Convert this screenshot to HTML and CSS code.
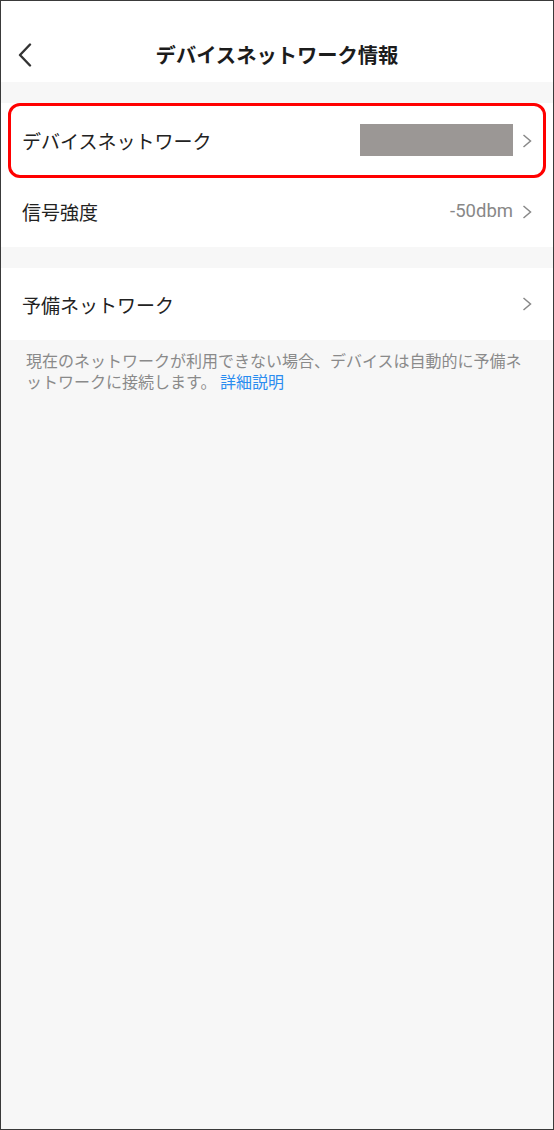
FILE: index.html
```html
<!DOCTYPE html>
<html lang="ja">
<head>
<meta charset="utf-8">
<link rel="stylesheet" href="styles.css">
</head>
<body>
<div class="frame">
  <header class="topbar">
    <svg class="back" width="14" height="24" viewBox="0 0 14 24"><path d="M12 1.5 L2 12 L12 22.5" fill="none" stroke="#333" stroke-width="2.4" stroke-linecap="round" stroke-linejoin="round"/></svg>
    <h1 class="title">デバイスネットワーク情報</h1>
  </header>
  <div class="gap"></div>
  <section class="group">
    <div class="row row-first">
      <span class="label">デバイスネットワーク</span>
      <span class="right"><span class="masked"></span><svg class="chev" width="10" height="14" viewBox="0 0 10 14"><path d="M1.5 1 L8.5 7 L1.5 13" fill="none" stroke="#888" stroke-width="1.5"/></svg></span>
      <div class="highlight"></div>
    </div>
    <div class="row row-second">
      <span class="label">信号強度</span>
      <span class="right"><span class="value">-50dbm</span><svg class="chev" width="10" height="14" viewBox="0 0 10 14"><path d="M1.5 1 L8.5 7 L1.5 13" fill="none" stroke="#888" stroke-width="1.5"/></svg></span>
    </div>
  </section>
  <div class="gap"></div>
  <section class="group">
    <div class="row row-third">
      <span class="label">予備ネットワーク</span>
      <span class="right"><svg class="chev" width="10" height="14" viewBox="0 0 10 14"><path d="M1.5 1 L8.5 7 L1.5 13" fill="none" stroke="#888" stroke-width="1.5"/></svg></span>
    </div>
  </section>
  <p class="note">現在のネットワークが利用できない場合、デバイスは自動的に予備ネットワークに接続します。 <a class="link">詳細説明</a></p>
</div>
</body>
</html>
```
FILE: styles.css
```css
* { box-sizing: border-box; }
html, body { margin: 0; padding: 0; }
body {
  width: 554px;
  height: 1130px;
  font-family: "Noto Sans CJK JP", "Noto Sans", sans-serif;
  background: #f7f7f7;
}
.frame {
  width: 554px;
  height: 1130px;
  border: 1px solid #3a3a3a;
  background: #f7f7f7;
  overflow: hidden;
}
.topbar {
  height: 81px;
  background: #fff;
  display: flex;
  align-items: center;
  justify-content: center;
  position: relative;
  padding-top: 26px;
}
.back {
  position: absolute;
  left: 17px;
  top: 42px;
}
.title {
  margin: 0;
  font-size: 20.3px;
  font-weight: 700;
  color: #1c1c1c;
  line-height: 1;
}
.gap { height: 21px; }
.group { background: #fff; }
.row {
  display: flex;
  align-items: center;
  justify-content: space-between;
  padding: 0 21px 0 21px;
  position: relative;
}
.row-first { height: 75px; }
.row-second { height: 69px; padding-bottom: 2px; }
.row-third { height: 72px; }
.label {
  font-size: 19px;
  color: #222;
  line-height: 1;
}
.right {
  display: flex;
  align-items: center;
  gap: 9px;
}
.masked {
  width: 153px;
  height: 32px;
  background: #9b9795;
  margin-top: -2px;
}
.value {
  font-family: "Roboto", "Liberation Sans", sans-serif;
  font-size: 18.5px;
  color: #888;
  line-height: 1;
}
.chev { display: block; }
.highlight {
  position: absolute;
  left: 7px;
  top: 0;
  width: 538px;
  height: 75px;
  border: 3px solid #f00;
  border-radius: 12px;
}
.note {
  margin: 0;
  padding: 10px 0 0 25px;
  width: 529px;
  font-size: 16px;
  line-height: 20.5px;
  color: #8a8a8a;
}
.link { color: #2a8cf0; }
```
